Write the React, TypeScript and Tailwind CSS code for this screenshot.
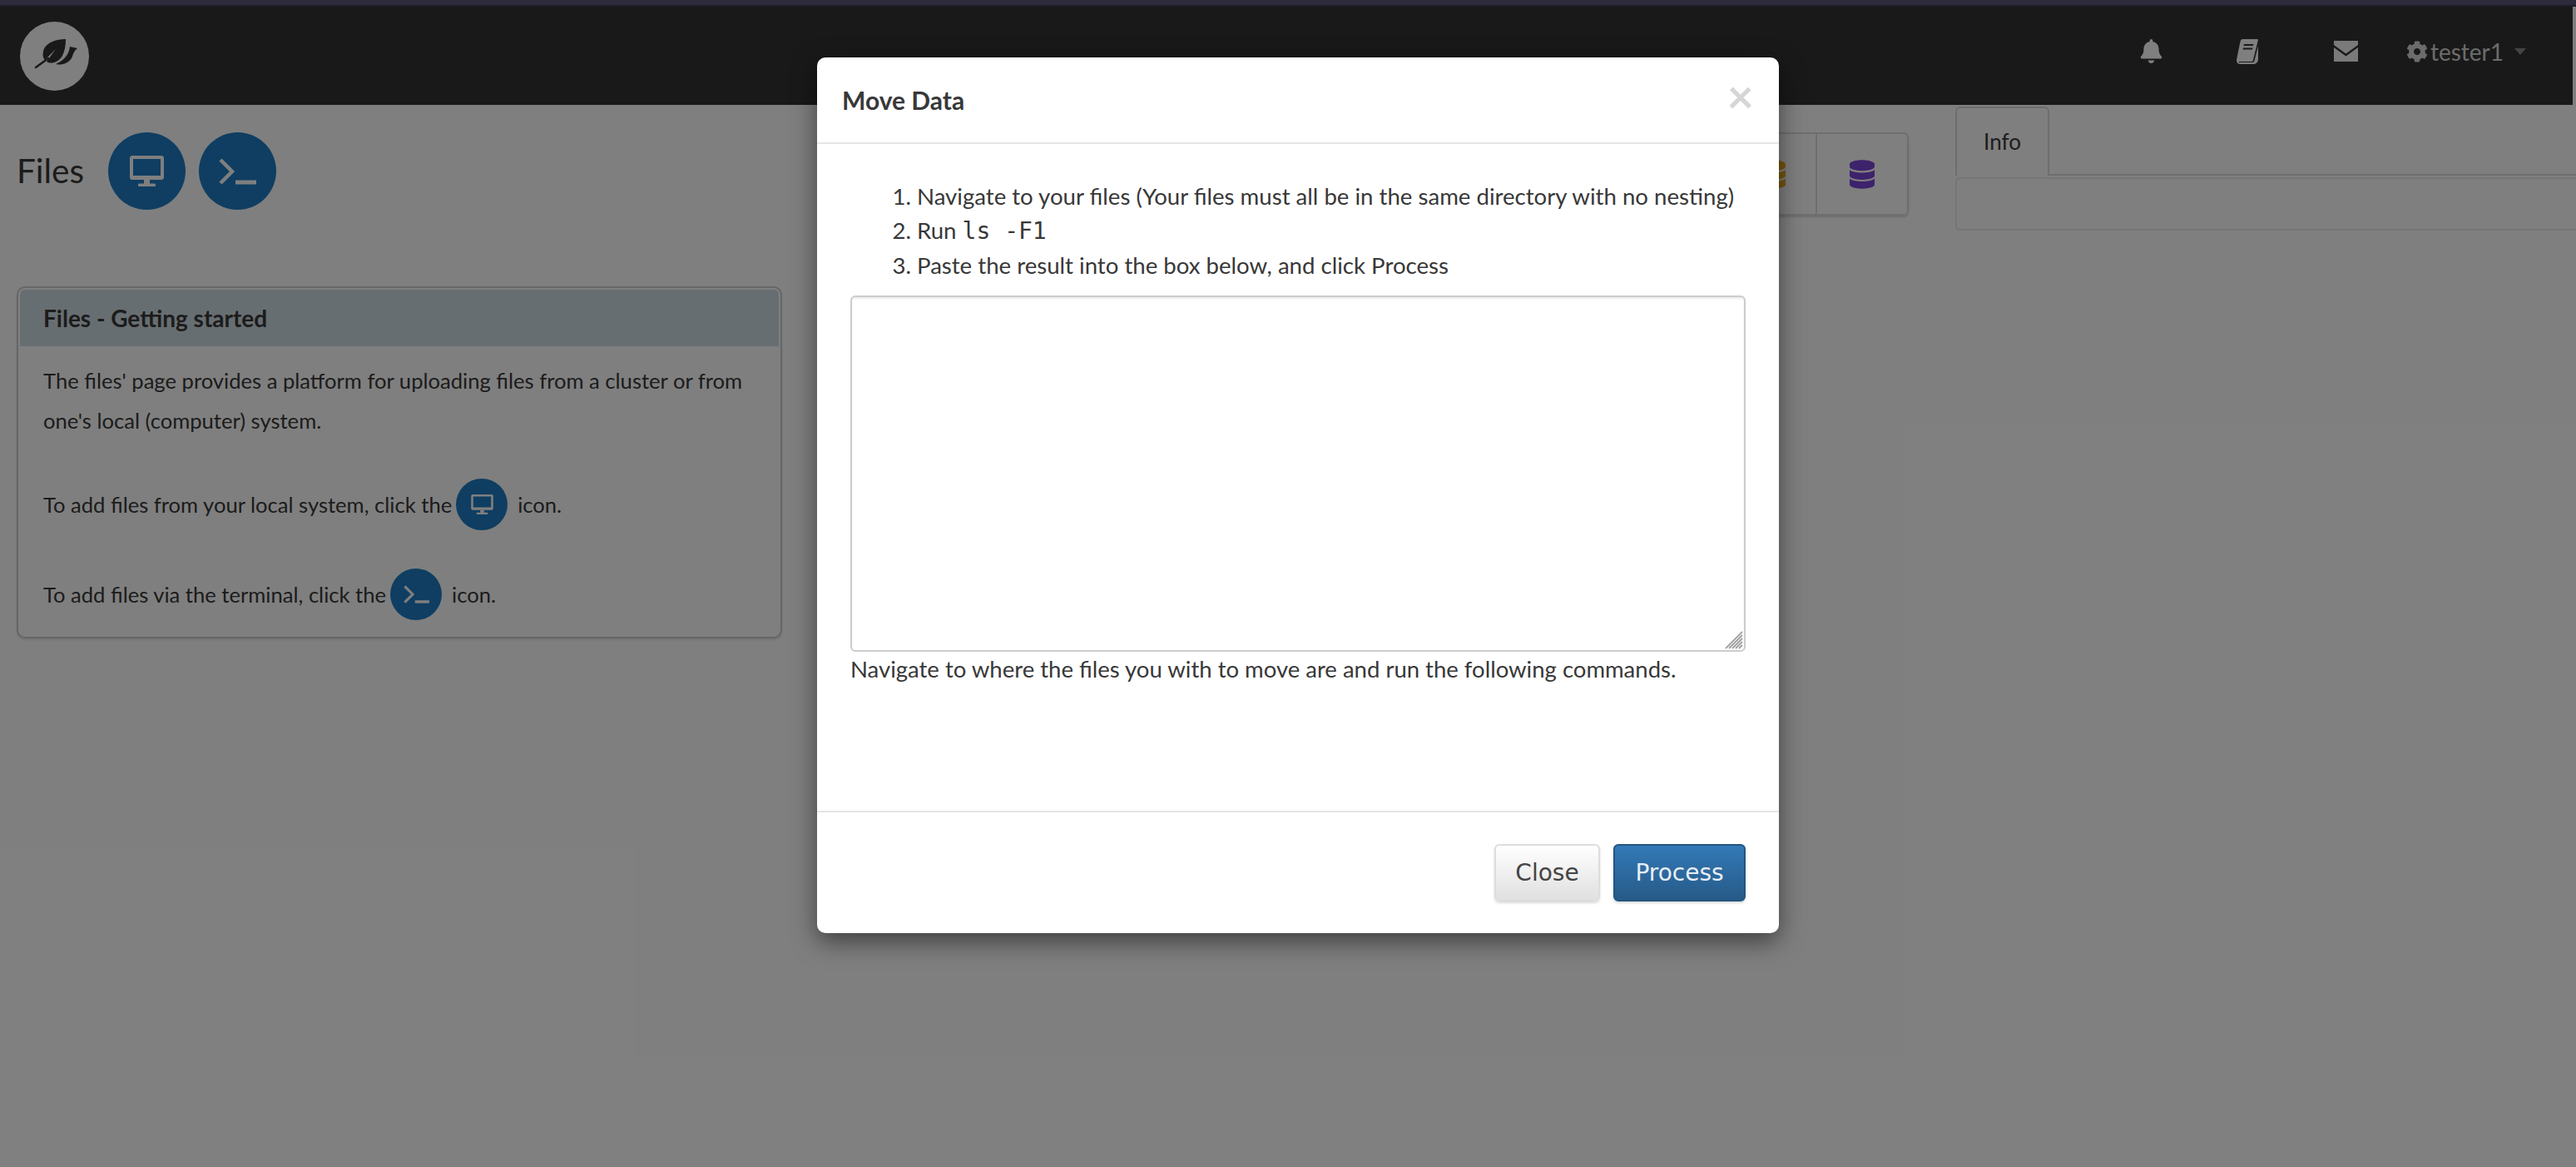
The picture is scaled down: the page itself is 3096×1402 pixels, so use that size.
import { FaBell, FaCog, FaDatabase } from "react-icons/fa";

const lato = "font-['Lato','Liberation_Sans',sans-serif]";

function LeafLogo() {
  return (
    <svg viewBox="0 0 83 83" className="w-[83px] h-[83px]">
      <circle cx="41.5" cy="41.5" r="41.5" fill="#fff" />
      <path d="M55 21C44 21 30 25 28 36C27 41 28 44 30 46L43 33L32 48C38 52 47 48 51 41C54 35 55 28 55 21Z" fill="#333" />
      <path d="M34 44L19 55" stroke="#333" strokeWidth="2.6" strokeLinecap="round" fill="none" />
      <path d="M69 32L60 30C59 40 52 47 43 51C50 53 58 50 62 44C64 40 64 36 69 32Z" fill="#333" />
    </svg>
  );
}

function DesktopIcon({ className }: { className: string }) {
  return (
    <svg viewBox="0 0 41 37" className={className} fill="#fff">
      <path fillRule="evenodd" d="M3 0H38C39.700 0 41 1.300 41 3V26C41 27.700 39.700 29 38 29H3C1.300 29 0 27.700 0 26V3C0 1.300 1.300 0 3 0ZM4 4V24H37V4Z" />
      <rect x="17" y="29" width="7" height="5" />
      <rect x="10" y="33.500" width="21" height="3.500" rx="1" />
    </svg>
  );
}

function TerminalIcon({ className }: { className: string }) {
  return (
    <svg viewBox="0 0 45 32" className={className} fill="none" stroke="#fff">
      <path d="M2 2L16 16L2 30" strokeWidth="4.500" />
      <path d="M20 29H45" strokeWidth="5" />
    </svg>
  );
}

function BookIcon() {
  return (
    <svg viewBox="0 0 26 30" className="w-[26px] h-[30px]" fill="#fff">
      <path fillRule="evenodd" d="M7 0H25C26 0 26 1 25.700 2L20 25C19.700 26.500 19 27 17.500 27H4C3 27 2.500 27.500 3 28C3.500 28.500 5 28 6 28H19C20 28 21 27.500 21.500 26L26 8V25C25.500 28 23 30 20 30H4C1 30 0 27 0 25L4.500 3C5 1 6 0 7 0ZM9 6L8.500 8H20L20.500 6ZM8 10.500L7.500 12.500H19L19.500 10.500Z" />
    </svg>
  );
}

function EnvelopeIcon() {
  return (
    <svg viewBox="0 0 29 25" className="w-[29px] h-[25px]" fill="#f4f4f4">
      <path d="M0 0H29V5L14.500 15.500L0 5Z" />
      <path d="M0 8L14.500 18.500L29 8V25H0Z" />
    </svg>
  );
}

function App() {
  return (
    <div className={`${lato} relative w-[3096px] h-[1402px] overflow-hidden bg-white text-[#383838]`}>
      <div className="h-[6px] bg-[#5a5678]" />
      <div className="h-[2px] bg-[#3a3852]" />
      <nav className="h-[118px] bg-[#333] flex items-center justify-between mr-[4px]">
        <div className="pl-[24px]">
          <LeafLogo />
        </div>
        <div className="flex items-center -mt-[11px] text-[#d8d8d8] text-[28px]">
          <FaBell className="w-[27px] h-[29px] text-white" />
          <div className="ml-[89px]"><BookIcon /></div>
          <div className="ml-[91px]"><EnvelopeIcon /></div>
          <FaCog className="ml-[58px] w-[26px] h-[26px]" />
          <span className="ml-[3px] text-[28px] leading-none">tester1</span>
          <span className="ml-[13px] mr-[56px] w-0 h-0 border-x-[7px] border-x-transparent border-t-[8px] border-t-[#888]" />
        </div>
      </nav>

      <div className="flex">
        <div className="w-[960px] shrink-0 pl-[20px] pr-[20px]">
          <div className="flex items-center h-[93px] mt-[33px]">
            <h1 className="text-[40.5px] font-normal leading-none w-[110px]">Files</h1>
            <div className="flex gap-[16px]">
              <div className="w-[93px] h-[93px] rounded-full bg-[#1f7dc4] flex items-center justify-center">
                <DesktopIcon className="w-[41px] h-[37px]" />
              </div>
              <div className="w-[93px] h-[93px] rounded-full bg-[#1f7dc4] flex items-center justify-center">
                <TerminalIcon className="w-[45px] h-[32px]" />
              </div>
            </div>
          </div>

          <div className="mt-[92px] h-[423px] border-2 border-[#c8ccce] rounded-[10px] p-[2px] shadow-[0_2px_3px_rgba(0,0,0,0.1)]">
            <div className="h-[68px] bg-[#cfdde3] flex items-center rounded-t-[6px] pl-[28px] text-[28px] font-bold leading-none">
              Files - Getting started
            </div>
            <div className="pl-[28px] pr-[24px] pt-[17px] text-[25.6px] leading-[48px]">
              <p>The files' page provides a platform for uploading files from a cluster or from one's local (computer) system.</p>
              <p className="mt-[46px] flex items-center h-[62px]">
                To add files from your local system, click the
                <span className="w-[62px] h-[62px] ml-[5px] mr-[12px] rounded-full bg-[#1f7dc4] flex items-center justify-center">
                  <DesktopIcon className="w-[27px] h-[24px]" />
                </span>
                icon.
              </p>
              <p className="mt-[46px] flex items-center h-[62px]">
                To add files via the terminal, click the
                <span className="w-[62px] h-[62px] ml-[5px] mr-[12px] rounded-full bg-[#1f7dc4] flex items-center justify-center">
                  <TerminalIcon className="w-[31px] h-[22px]" />
                </span>
                icon.
              </p>
            </div>
          </div>
        </div>

        <div className="flex-1 flex justify-end items-start pr-[56px] pt-[33px]">
          <div className="flex h-[100px] border-2 border-[#ddd] rounded-[6px] shadow-[0_2px_3px_rgba(0,0,0,0.15)]">
            <div className="w-[110px] flex items-center justify-end pr-[36px] border-r-2 border-[#ddd]">
              <FaDatabase className="w-[30px] h-[35px] text-[#e8ac1c]" />
            </div>
            <div className="w-[108px] flex items-center justify-center">
              <FaDatabase className="w-[30px] h-[35px] text-[#7a45d8]" />
            </div>
          </div>
        </div>

        <div className="w-[746px] shrink-0 pt-[2px]">
          <div className="flex h-[83px] border-b-2 border-[#ddd]">
            <div className="w-[113px] -mb-[2px] bg-white border-2 border-b-0 border-[#ddd] rounded-t-[6px] flex items-center justify-center text-[26px]">
              Info
            </div>
          </div>
          <div className="mt-[2px] h-[64px] border-2 border-r-0 border-[#e6eaee] rounded-l-[6px]" />
        </div>
      </div>

      <div className="absolute inset-0 bg-black/50 flex justify-center pl-[24px] pt-[69px]">
        <div className="w-[1156px] h-[1052px] bg-white rounded-[10px] shadow-[0_10px_30px_rgba(0,0,0,0.5)] flex flex-col">
          <div className="h-[104px] shrink-0 border-b-2 border-[#e5e5e5] flex items-center justify-between pl-[30px] pr-[34px]">
            <h4 className="text-[30px] font-bold leading-none">Move Data</h4>
            <span className="text-[56px] font-bold leading-none text-[#d6d6d6] -mt-[10px] -mr-[4px]">×</span>
          </div>
          <div className="flex-1 px-[40px] pt-[42px]">
            <ol className="pl-[80px] list-decimal text-[27.6px] leading-[41px]">
              <li>Navigate to your files (Your files must all be in the same directory with no nesting)</li>
              <li>Run <code className="font-['DejaVu_Sans_Mono',monospace] text-[28px]">ls -F1</code></li>
              <li>Paste the result into the box below, and click Process</li>
            </ol>
            <div className="relative mt-[16px]">
              <textarea className="block w-full h-[428px] resize-none bg-white border-2 border-[#ccc] rounded-[6px] shadow-[inset_0_2px_2px_rgba(0,0,0,0.075)]" />
              <svg viewBox="0 0 22 22" className="absolute right-[3px] bottom-[3px] w-[22px] h-[22px]" stroke="#a0a0a0" strokeWidth="1.8">
                <path d="M21 1L1 21M21 5L5 21M21 9L9 21M21 13L13 21M21 17L17 21" />
              </svg>
            </div>
            <p className="mt-[1px] text-[27.5px] leading-[40px]">Navigate to where the files you with to move are and run the following commands.</p>
          </div>
          <div className="h-[147px] shrink-0 border-t-2 border-[#e5e5e5] flex items-start justify-end gap-[16px] pr-[40px] pt-[38px]">
            <button className="w-[127px] h-[69px] rounded-[6px] border-2 border-[#ddd] bg-gradient-to-b from-white to-[#e0e0e0] text-[28px] text-[#444] font-['DejaVu_Sans',sans-serif] shadow-[0_2px_3px_rgba(0,0,0,0.15)]">Close</button>
            <button className="w-[159px] h-[69px] rounded-[6px] border-2 border-[#245580] bg-gradient-to-b from-[#337ab7] to-[#265a88] text-[28px] text-[#e8eef4] font-['DejaVu_Sans',sans-serif] shadow-[0_2px_3px_rgba(0,0,0,0.15)]">Process</button>
          </div>
        </div>
      </div>
    </div>
  );
}

export default App;
